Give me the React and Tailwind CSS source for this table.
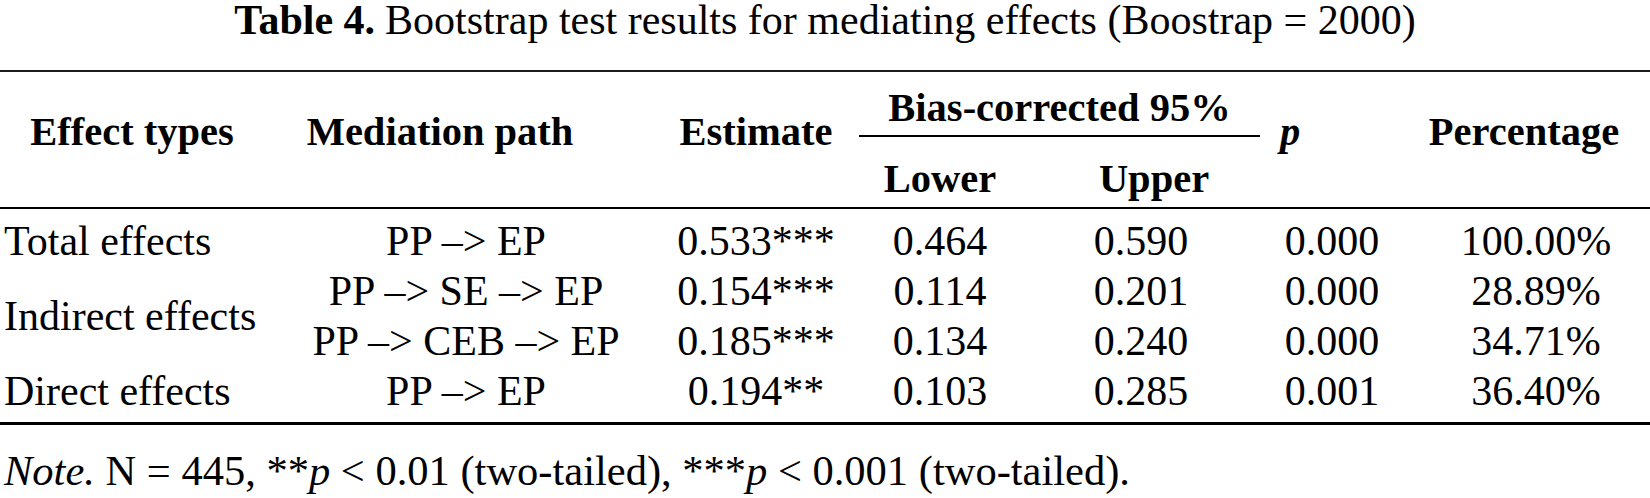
import React from 'react';

const cols = 'grid grid-cols-[260px_412px_168px_200px_202px_180px_228px]';

const rows = [
  { path: 'PP –> EP', est: '0.533***', lo: '0.464', up: '0.590', p: '0.000', pct: '100.00%' },
  { path: 'PP –> SE –> EP', est: '0.154***', lo: '0.114', up: '0.201', p: '0.000', pct: '28.89%' },
  { path: 'PP –> CEB –> EP', est: '0.185***', lo: '0.134', up: '0.240', p: '0.000', pct: '34.71%' },
  { path: 'PP –> EP', est: '0.194**', lo: '0.103', up: '0.285', p: '0.001', pct: '36.40%' },
];

const labels = ['Total effects', 'Indirect effects', null, 'Direct effects'];

export default function App() {
  return (
    <div
      className="w-[1650px] h-[498px] bg-white text-black text-[40px] overflow-hidden"
      style={{ fontFamily: "'Liberation Serif', 'Times New Roman', serif" }}
    >
      {/* Caption */}
      <div className="pt-[2px] h-[36px] leading-[36px] text-[42px] text-center whitespace-nowrap">
        <span className="font-bold">Table 4.</span>
        <span className="ml-[10px]">Bootstrap test results for mediating effects (Boostrap = 2000)</span>
      </div>

      <div className="mt-[34px] h-[2px] bg-[#1c1c1c]" />

      {/* Header */}
      <div className={`${cols} grid-rows-[63px_2px_70px] font-bold text-[40.5px] leading-[40px] whitespace-nowrap`}>
        <div className="row-span-3 pt-[40px] pl-[4px] text-center">Effect types</div>
        <div className="row-span-3 pt-[40px] pr-[52px] text-center">Mediation path</div>
        <div className="row-span-3 pt-[40px] text-center">Estimate</div>
        <div className="col-span-2 pt-[16px]">
          <div className="ml-[19px] w-[401px] text-center">Bias-corrected 95%</div>
        </div>
        <div className="row-span-3 pt-[40px] pr-[84px] text-center italic">p</div>
        <div className="row-span-3 pt-[40px] pr-[24px] text-center">Percentage</div>
        <div className="col-span-2 col-start-4 row-start-2">
          <div className="ml-[19px] w-[401px] h-[2px] bg-black" />
        </div>
        <div className="col-start-4 row-start-3 pt-[22px] text-center">Lower</div>
        <div className="col-start-5 row-start-3 pt-[22px] pl-[26px] text-center">Upper</div>
      </div>

      <div className="h-[2px] bg-black" />

      {/* Body */}
      <div className={`${cols} grid-rows-[50px_50px_50px_50px] pt-[7px] pb-[6px] text-[42px] leading-[50px] whitespace-nowrap`}>
        {rows.map((r, i) => (
          <React.Fragment key={i}>
            {labels[i] && (
              <div
                className={`col-start-1 pl-[4px] flex items-center ${i === 1 ? 'row-span-2' : ''}`}
                style={{ gridRowStart: i + 1 }}
              >
                {labels[i]}
              </div>
            )}
            <div className="col-start-2 text-center" style={{ gridRowStart: i + 1 }}>{r.path}</div>
            <div className="col-start-3 text-center" style={{ gridRowStart: i + 1 }}>{r.est}</div>
            <div className="col-start-4 text-center" style={{ gridRowStart: i + 1 }}>{r.lo}</div>
            <div className="col-start-5 text-center" style={{ gridRowStart: i + 1 }}>{r.up}</div>
            <div className="col-start-6 text-center" style={{ gridRowStart: i + 1 }}>{r.p}</div>
            <div className="col-start-7 text-center" style={{ gridRowStart: i + 1 }}>{r.pct}</div>
          </React.Fragment>
        ))}
      </div>

      <div className="h-[3px] bg-black" />

      {/* Note */}
      <div className="mt-[26px] pl-[4px] text-[42.5px] leading-[40px] whitespace-nowrap">
        <i>Note.</i> N = 445, **<i>p</i> &lt; 0.01 (two-tailed), ***<i>p</i> &lt; 0.001 (two-tailed).
      </div>
    </div>
  );
}
